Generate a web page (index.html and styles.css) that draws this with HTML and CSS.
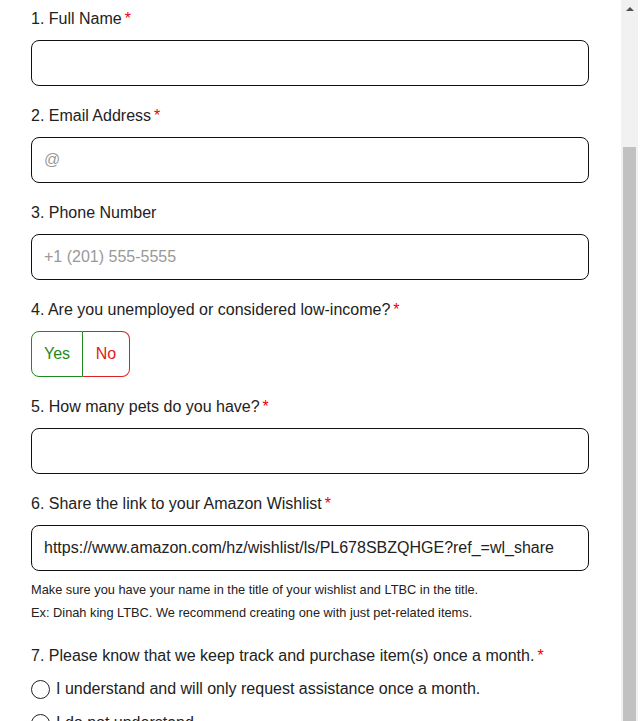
FILE: index.html
```html
<!DOCTYPE html>
<html lang="en">
<head>
<meta charset="utf-8">
<title>Assistance Form</title>
<link rel="stylesheet" href="styles.css">
</head>
<body>
<div class="page">
  <main class="form">
    <div class="field">
      <label class="q">1. Full Name<span class="req">*</span></label>
      <input class="text" type="text">
    </div>
    <div class="field">
      <label class="q">2. Email Address<span class="req">*</span></label>
      <input class="text" type="email" placeholder="@">
    </div>
    <div class="field">
      <label class="q">3. Phone Number</label>
      <input class="text" type="tel" placeholder="+1 (201) 555-5555">
    </div>
    <div class="field">
      <label class="q">4. Are you unemployed or considered low-income?<span class="req">*</span></label>
      <div class="yesno">
        <button class="opt yes" type="button">Yes</button>
        <button class="opt no" type="button">No</button>
      </div>
    </div>
    <div class="field">
      <label class="q">5. How many pets do you have?<span class="req">*</span></label>
      <input class="text" type="text">
    </div>
    <div class="field field-help">
      <label class="q">6. Share the link to your Amazon Wishlist<span class="req">*</span></label>
      <input class="text filled" type="text" value="https://www.amazon.com/hz/wishlist/ls/PL678SBZQHGE?ref_=wl_share">
      <div class="help">
        <p>Make sure you have your name in the title of your wishlist and LTBC in the title.</p>
        <p>Ex: Dinah king LTBC. We recommend creating one with just pet-related items.</p>
      </div>
    </div>
    <div class="field">
      <label class="q">7. Please know that we keep track and purchase item(s) once a month.<span class="req">*</span></label>
      <div class="radio"><span class="circle"></span><span>I understand and will only request assistance once a month.</span></div>
      <div class="radio"><span class="circle"></span><span>I do not understand</span></div>
    </div>
  </main>
  <div class="scrollbar">
    <div class="arrow-btn"><span class="arrow"></span></div>
    <div class="track"><div class="thumb"></div></div>
  </div>
  <div class="edge"></div>
</div>
</body>
</html>
```
FILE: styles.css
```css
html, body {
  margin: 0;
  padding: 0;
  background: #fff;
  height: 721px;
  overflow: hidden;
}
body {
  font-family: "Liberation Sans", Arial, sans-serif;
  color: #222;
}
.page {
  display: flex;
  height: 721px;
}
.form {
  width: 621px;
  box-sizing: border-box;
  padding: 9px 32px 0 31px;
  flex: none;
}
.field {
  margin-bottom: 20px;
}
.field-help {
  margin-bottom: 22px;
}
.q {
  display: block;
  font-size: 16px;
  line-height: 20px;
  margin-bottom: 11px;
  color: #222;
}
.req {
  color: #e00;
  margin-left: 3px;
}
.text {
  display: block;
  width: 100%;
  box-sizing: border-box;
  height: 46px;
  border: 1px solid #111;
  border-radius: 8px;
  padding: 0 12px;
  font-family: "Liberation Sans", Arial, sans-serif;
  font-size: 16px;
  color: #222;
  background: #fff;
  outline: none;
  margin: 0;
}
.text::placeholder {
  color: #999;
}
.yesno {
  display: flex;
  height: 46px;
}
.opt {
  height: 46px;
  box-sizing: border-box;
  background: #fff;
  font-family: "Liberation Sans", Arial, sans-serif;
  font-size: 16px;
  padding: 0;
  margin: 0;
  cursor: pointer;
}
.yes {
  width: 52px;
  border: 1px solid #1f8a1f;
  border-radius: 8px 0 0 8px;
  color: #1a8a1a;
}
.no {
  width: 47px;
  border: 1px solid #e02020;
  border-left: none;
  border-radius: 0 8px 8px 0;
  color: #e02020;
}
.help {
  margin-top: 7px;
  font-size: 12.8px;
  line-height: 23px;
  color: #222;
}
.help p {
  margin: 0;
}
.radio {
  display: flex;
  align-items: center;
  gap: 6px;
  height: 24px;
  margin-bottom: 10px;
  font-size: 16px;
  color: #222;
}
.circle {
  width: 19px;
  height: 19px;
  box-sizing: border-box;
  border: 1px solid #222;
  border-radius: 50%;
  flex: none;
}
.scrollbar {
  width: 17px;
  flex: none;
  background: #f1f1f1;
  display: flex;
  flex-direction: column;
}
.arrow-btn {
  height: 17px;
  display: flex;
  justify-content: center;
  align-items: center;
}
.arrow {
  width: 0;
  height: 0;
  border-left: 4px solid transparent;
  border-right: 4px solid transparent;
  border-bottom: 4px solid #505050;
}
.track {
  flex: 1;
  padding: 130px 2px 0;
  display: flex;
}
.thumb {
  flex: 1;
  background: #c1c1c1;
}
.edge {
  flex: 1;
  background: #fff;
}
```
